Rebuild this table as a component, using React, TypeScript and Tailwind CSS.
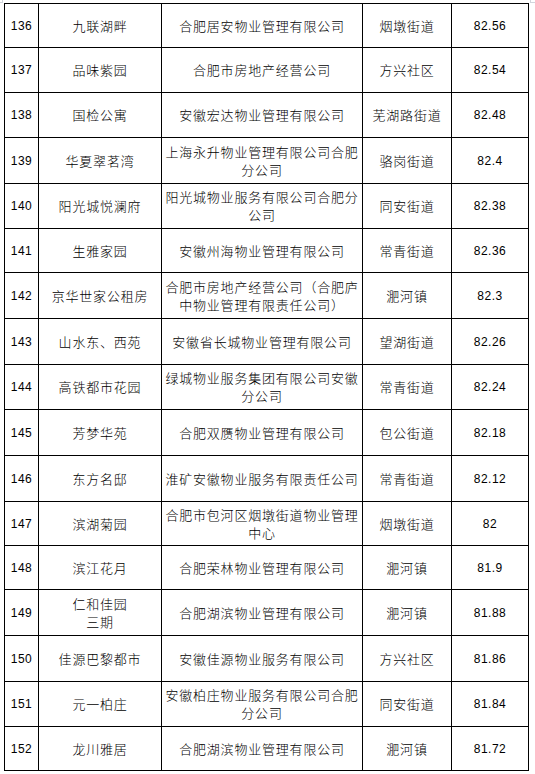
const rows: { h: string; no: string; name: string[]; company: string[]; area: string; score: string }[] = [
  { h: 'h-[44px]', no: '136', name: ['九联湖畔'], company: ['合肥居安物业管理有限公司'], area: '烟墩街道', score: '82.56' },
  { h: 'h-[45px]', no: '137', name: ['品味紫园'], company: ['合肥市房地产经营公司'], area: '方兴社区', score: '82.54' },
  { h: 'h-[45px]', no: '138', name: ['国检公寓'], company: ['安徽宏达物业管理有限公司'], area: '芜湖路街道', score: '82.48' },
  { h: 'h-[46px]', no: '139', name: ['华夏翠茗湾'], company: ['上海永升物业管理有限公司合肥', '分公司'], area: '骆岗街道', score: '82.4' },
  { h: 'h-[45px]', no: '140', name: ['阳光城悦澜府'], company: ['阳光城物业服务有限公司合肥分', '公司'], area: '同安街道', score: '82.38' },
  { h: 'h-[44px]', no: '141', name: ['生雅家园'], company: ['安徽州海物业管理有限公司'], area: '常青街道', score: '82.36' },
  { h: 'h-[46px]', no: '142', name: ['京华世家公租房'], company: ['合肥市房地产经营公司（合肥庐', '中物业管理有限责任公司）'], area: '淝河镇', score: '82.3' },
  { h: 'h-[46px]', no: '143', name: ['山水东、西苑'], company: ['安徽省长城物业管理有限公司'], area: '望湖街道', score: '82.26' },
  { h: 'h-[45px]', no: '144', name: ['高铁都市花园'], company: ['绿城物业服务集团有限公司安徽', '分公司'], area: '常青街道', score: '82.24' },
  { h: 'h-[46px]', no: '145', name: ['芳梦华苑'], company: ['合肥双赝物业管理有限公司'], area: '包公街道', score: '82.18' },
  { h: 'h-[46px]', no: '146', name: ['东方名邸'], company: ['淮矿安徽物业服务有限责任公司'], area: '常青街道', score: '82.12' },
  { h: 'h-[44px]', no: '147', name: ['滨湖菊园'], company: ['合肥市包河区烟墩街道物业管理', '中心'], area: '烟墩街道', score: '82' },
  { h: 'h-[44px]', no: '148', name: ['滨江花月'], company: ['合肥荣林物业管理有限公司'], area: '淝河镇', score: '81.9' },
  { h: 'h-[46px]', no: '149', name: ['仁和佳园', '三期'], company: ['合肥湖滨物业管理有限公司'], area: '淝河镇', score: '81.88' },
  { h: 'h-[46px]', no: '150', name: ['佳源巴黎都市'], company: ['安徽佳源物业服务有限公司'], area: '方兴社区', score: '81.86' },
  { h: 'h-[45px]', no: '151', name: ['元一柏庄'], company: ['安徽柏庄物业服务有限公司合肥', '分公司'], area: '同安街道', score: '81.84' },
  { h: 'h-[44px]', no: '152', name: ['龙川雅居'], company: ['合肥湖滨物业管理有限公司'], area: '淝河镇', score: '81.72' },
];

function Lines({ lines }: { lines: string[] }) {
  return (
    <span className="block text-center leading-[18px]">
      {lines.map((l, i) => (
        <span key={i} className="block whitespace-nowrap">
          {l}
        </span>
      ))}
    </span>
  );
}

export default function App() {
  return (
    <div className="relative min-h-[774px] w-[535px] bg-white pt-[3px] pl-[4px] text-black font-['Noto_Sans_CJK_SC',sans-serif] font-light text-[13px] tracking-[0.8px]">
      {/* faint crop marks in the page corners */}
      <div className="absolute left-0 top-0 h-[3px] w-[3px] border-r border-b border-gray-300" />
      <div className="absolute right-0 top-0 h-[3px] w-[5px] border-l border-b border-gray-300" />
      <div className="w-[525px] border-l border-t border-black">
        {rows.map((r) => (
          <div key={r.no} className={`flex border-b border-black ${r.h}`}>
            <div className="flex w-[34px] items-center justify-center border-r border-black font-['Liberation_Sans',sans-serif] font-normal text-[12px] tracking-[0.5px]">
              {r.no}
            </div>
            <div className="flex w-[123px] items-center justify-center border-r border-black">
              <Lines lines={r.name} />
            </div>
            <div className="flex w-[201px] items-center justify-center border-r border-black">
              <Lines lines={r.company} />
            </div>
            <div className="flex w-[89px] items-center justify-center border-r border-black">
              {r.area}
            </div>
            <div className="flex w-[77px] items-center justify-center border-r border-black font-['Liberation_Sans',sans-serif] font-normal text-[12px] tracking-[0.5px]">
              {r.score}
            </div>
          </div>
        ))}
      </div>
    </div>
  );
}
